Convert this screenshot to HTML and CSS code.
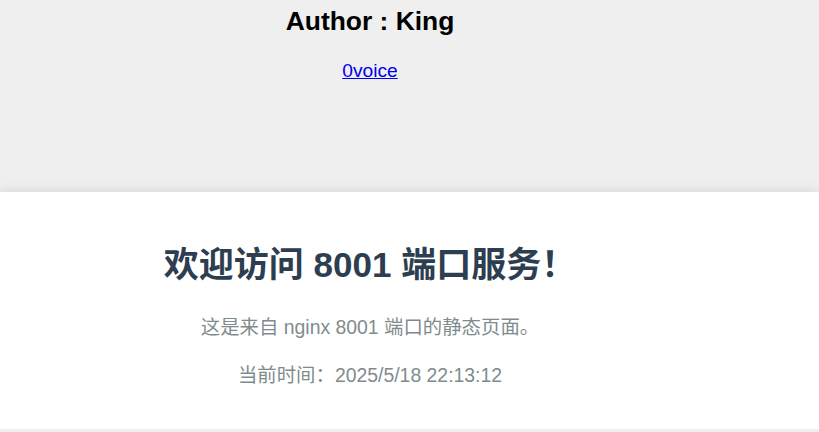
FILE: index.html
```html
<!DOCTYPE html>
<html lang="zh-CN">
<head>
    <meta charset="UTF-8">
    <meta name="viewport" content="width=device-width, initial-scale=1.0">
    <title>8001 端口服务</title>
    <link rel="stylesheet" href="styles.css">
</head>
<body>
    <div class="top">
        <h2>Author : King</h2>
        <p class="link"><a href="#">0voice</a></p>
    </div>

    <div class="card">
        <div class="card-inner">
            <h1>欢迎访问 8001 端口服务！</h1>
            <p class="desc">这是来自 nginx 8001 端口的静态页面。</p>
            <p class="desc time">当前时间：2025/5/18 22:13:12</p>
        </div>
    </div>
</body>
</html>
```

FILE: styles.css
```css
body {
    margin: 0;
    font-family: "Liberation Sans", "Noto Sans CJK SC", sans-serif;
    background-color: #efefef;
    color: #000;
}

.top {
    width: 740px;
    height: 192px;
    box-sizing: border-box;
    padding-top: 6px;
    text-align: center;
}

.top h2 {
    margin: 0;
    font-size: 26.4px;
    line-height: 30px;
    font-weight: bold;
}

.link {
    margin: 24px 0 0;
    font-size: 19.2px;
    line-height: 22px;
}

.link a {
    color: #0000ee;
}

.card {
    background: #fff;
    height: 237px;
    box-shadow: 0 0 12px rgba(0, 0, 0, 0.12);
}

.card-inner {
    width: 740px;
    padding-top: 52px;
    text-align: center;
}

.card h1 {
    margin: 0;
    font-size: 35px;
    line-height: 42px;
    font-weight: bold;
    color: #2c3e50;
}

.desc {
    margin: 29px 0 0;
    font-size: 19.4px;
    line-height: 24px;
    color: #7f8c8d;
}

.time {
    margin-top: 24px;
}
```
